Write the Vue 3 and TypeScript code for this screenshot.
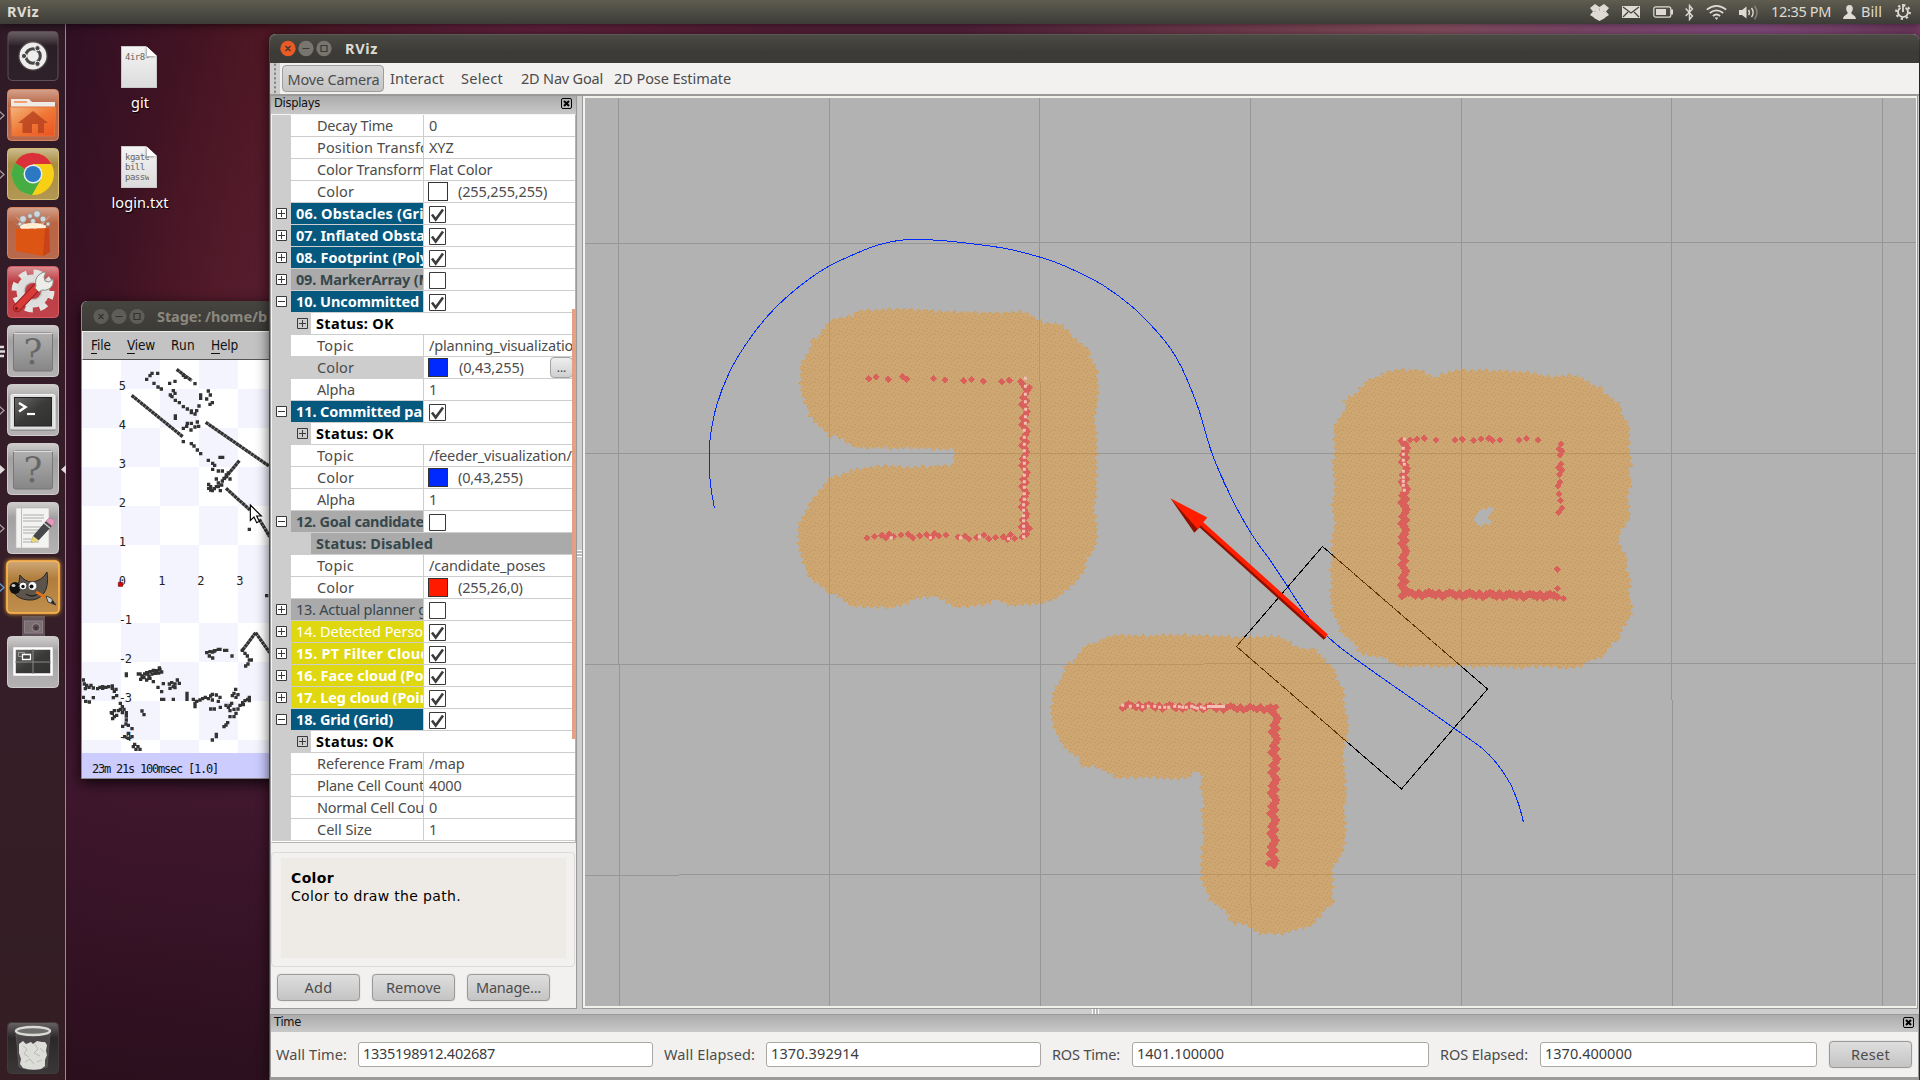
<script setup lang="ts">
type Pt = [number, number]

interface Row {
  name: string
  kind: 'prop' | 'display' | 'status'
  tone?: 'ok' | 'off' | 'warn'
  light?: boolean
  open?: boolean
  selected?: boolean
  checked?: boolean
  swatch?: string
  value?: string
  w?: number
}

// Spreads a label to the advance width of the desktop's UI font.
const vFit = {
  mounted(el: HTMLElement, binding: { value: number | undefined }) {
    if (!binding.value) return
    const natural = el.getBoundingClientRect().width
    const count = (el.textContent ?? '').trim().length
    el.style.letterSpacing = `${((binding.value - natural) / count).toFixed(3)}px`
  },
}

const rows: Row[] = [
  { kind: 'prop', name: 'Decay Time', w: 76, value: '0' },
  { kind: 'prop', name: 'Position Transfo', w: 112, value: 'XYZ' },
  { kind: 'prop', name: 'Color Transform', w: 109, value: 'Flat Color' },
  { kind: 'prop', name: 'Color', w: 37, swatch: '#ffffff', value: '(255,255,255)' },
  { kind: 'display', tone: 'ok', name: '06. Obstacles (Grid', w: 137, checked: true },
  { kind: 'display', tone: 'ok', name: '07. Inflated Obsta', w: 129, checked: true },
  { kind: 'display', tone: 'ok', name: '08. Footprint (Poly', w: 132, checked: true },
  { kind: 'display', tone: 'off', name: '09. MarkerArray (M', w: 136, checked: false },
  { kind: 'display', tone: 'ok', open: true, name: '10. Uncommitted p', w: 136, checked: true },
  { kind: 'status', name: 'Status: OK', w: 78 },
  { kind: 'prop', name: 'Topic', w: 37, value: '/planning_visualization' },
  { kind: 'prop', name: 'Color', w: 37, swatch: '#0029ff', value: '(0,43,255)', selected: true },
  { kind: 'prop', name: 'Alpha', w: 38, value: '1' },
  { kind: 'display', tone: 'ok', open: true, name: '11. Committed pa', w: 126, checked: true },
  { kind: 'status', name: 'Status: OK', w: 78 },
  { kind: 'prop', name: 'Topic', w: 37, value: '/feeder_visualization/' },
  { kind: 'prop', name: 'Color', w: 37, swatch: '#0029ff', value: '(0,43,255)' },
  { kind: 'prop', name: 'Alpha', w: 38, value: '1' },
  { kind: 'display', tone: 'off', open: true, name: '12. Goal candidate', w: 128, checked: false },
  { kind: 'status', tone: 'off', name: 'Status: Disabled', w: 117 },
  { kind: 'prop', name: 'Topic', w: 37, value: '/candidate_poses' },
  { kind: 'prop', name: 'Color', w: 37, swatch: '#ff1a00', value: '(255,26,0)' },
  { kind: 'display', tone: 'off', light: true, name: '13. Actual planner g', w: 131, checked: false },
  { kind: 'display', tone: 'warn', light: true, name: '14. Detected Perso', w: 127, checked: true },
  { kind: 'display', tone: 'warn', name: '15. PT Filter Cloud', w: 134, checked: true },
  { kind: 'display', tone: 'warn', name: '16. Face cloud (Poi', w: 132, checked: true },
  { kind: 'display', tone: 'warn', name: '17. Leg cloud (Poin', w: 133, checked: true },
  { kind: 'display', tone: 'ok', open: true, name: '18. Grid (Grid)', w: 97, checked: true },
  { kind: 'status', name: 'Status: OK', w: 78 },
  { kind: 'prop', name: 'Reference Fram', w: 106, value: '/map' },
  { kind: 'prop', name: 'Plane Cell Count', w: 107, value: '4000' },
  { kind: 'prop', name: 'Normal Cell Cou', w: 107, value: '0' },
  { kind: 'prop', name: 'Cell Size', w: 55, value: '1' },
]

const menus = [
  { key: 'F', rest: 'ile', w: 20 },
  { key: 'V', rest: 'iew', w: 28 },
  { key: '', rest: 'Run', w: 24 },
  { key: 'H', rest: 'elp', w: 27 },
]

// ---- 3D view -------------------------------------------------------------
const scale = (ox: number, oy: number, sx: number, sy: number, flat: number[]): Pt[] => {
  const out: Pt[] = []
  for (let i = 0; i < flat.length; i += 2) out.push([ox + flat[i] / sx, oy + flat[i + 1] / sy])
  return out
}
const fmt = (p: Pt) => `${p[0].toFixed(1)} ${p[1].toFixed(1)}`

// Outline made of the corners of rotated costmap cells.
const jagged = (pts: Pt[]): string => {
  const out: Pt[] = []
  let k = 0
  pts.forEach((a, i) => {
    const b = pts[(i + 1) % pts.length]
    const dx = b[0] - a[0]
    const dy = b[1] - a[1]
    const len = Math.hypot(dx, dy)
    const n = Math.max(1, Math.round(len / 3.6))
    for (let j = 0; j < n; j++) {
      const t = j / n
      const o = (k++ % 2 ? 1.5 : -1.5) * (k % 6 < 2 ? 1.5 : 0.9)
      out.push([a[0] + dx * t + (dy / len) * o, a[1] + dy * t - (dx / len) * o])
    }
  })
  return 'M' + out.map(fmt).join('L') + 'Z'
}

const smooth = (p: Pt[]): string => {
  let d = 'M' + fmt(p[0])
  for (let i = 0; i < p.length - 1; i++) {
    const a = p[Math.max(0, i - 1)]
    const b = p[i]
    const c = p[i + 1]
    const e = p[Math.min(p.length - 1, i + 2)]
    d += `C${fmt([b[0] + (c[0] - a[0]) / 6, b[1] + (c[1] - a[1]) / 6])} ${fmt([c[0] - (e[0] - b[0]) / 6, c[1] - (e[1] - b[1]) / 6])} ${fmt(c)}`
  }
  return d
}

const blobA = scale(690, 220, 2.8, 3, [392, 298, 455, 288, 470, 272, 590, 266, 640, 268, 720, 275, 850, 278, 935, 274, 990, 308, 1035, 312, 1065, 335, 1065, 345, 1120, 390, 1120, 410, 1140, 445, 1143, 500, 1143, 540, 1132, 600, 1140, 650, 1138, 830, 1131, 870, 1140, 910, 1140, 970, 1105, 1032, 1110, 1042, 1090, 1075, 1035, 1130, 990, 1150, 900, 1158, 855, 1138, 830, 1155, 745, 1163, 685, 1128, 625, 1138, 600, 1155, 560, 1163, 455, 1160, 400, 1120, 380, 1130, 382, 1110, 330, 1070, 325, 1045, 310, 1010, 303, 970, 303, 910, 340, 845, 332, 832, 350, 832, 388, 775, 440, 758, 450, 750, 545, 735, 610, 742, 735, 735, 740, 712, 742, 690, 640, 685, 570, 685, 465, 683, 400, 643, 392, 655, 385, 640, 332, 590, 330, 565, 313, 530, 308, 490, 310, 432, 345, 370, 336, 357, 355, 358])
const blobB = scale(1220, 350, 3, 3, [440, 88, 480, 80, 495, 65, 540, 58, 600, 60, 648, 85, 665, 72, 710, 60, 790, 60, 850, 62, 945, 68, 975, 80, 1070, 75, 1130, 112, 1148, 108, 1145, 122, 1205, 168, 1203, 190, 1228, 225, 1228, 290, 1235, 345, 1228, 370, 1235, 400, 1222, 440, 1232, 500, 1200, 550, 1195, 580, 1222, 620, 1218, 650, 1232, 690, 1228, 730, 1238, 790, 1200, 850, 1200, 870, 1185, 872, 1145, 925, 1105, 932, 1085, 950, 1040, 955, 960, 948, 905, 955, 820, 948, 760, 952, 710, 945, 680, 952, 600, 948, 540, 952, 490, 922, 430, 915, 412, 905, 415, 890, 360, 845, 355, 820, 338, 790, 330, 740, 335, 690, 330, 660, 338, 620, 332, 575, 345, 530, 335, 465, 345, 410, 338, 345, 345, 290, 340, 235, 378, 170, 370, 155, 385, 140, 400, 142])
const hole = scale(1220, 350, 3, 3, [790, 475, 801, 479, 808, 468, 822, 478, 802, 503, 815, 514, 807, 526, 795, 518, 782, 530, 760, 510, 776, 485])
const blobC = scale(1030, 610, 3, 3, [165, 105, 205, 98, 222, 82, 265, 75, 350, 78, 400, 74, 520, 76, 650, 82, 745, 78, 810, 115, 845, 120, 856, 112, 862, 128, 915, 178, 920, 205, 940, 235, 943, 290, 957, 345, 950, 390, 938, 430, 950, 545, 942, 600, 948, 660, 942, 720, 905, 780, 912, 830, 905, 850, 912, 885, 890, 892, 850, 945, 800, 960, 745, 975, 720, 970, 690, 975, 640, 940, 615, 945, 595, 930, 600, 915, 540, 870, 530, 845, 515, 815, 512, 775, 515, 740, 512, 715, 522, 690, 515, 600, 522, 575, 515, 545, 510, 520, 522, 500, 500, 482, 485, 500, 435, 508, 350, 502, 262, 505, 200, 470, 155, 472, 148, 460, 152, 450, 95, 405, 85, 380, 70, 350, 62, 310, 68, 250, 105, 185, 100, 172, 112, 155, 125, 160])
const inflated = jagged(blobA) + jagged(blobB) + jagged(blobC) + 'M' + hole.map(fmt).join('L') + 'Z'

const planned = smooth([
  ...scale(690, 220, 2.8, 3, [68, 863, 57, 790, 54, 720, 57, 650, 75, 555, 110, 458, 155, 375, 210, 297, 270, 232, 330, 180, 390, 138, 500, 85, 560, 66, 605, 59, 650, 59, 720, 63, 880, 85, 1000, 118, 1080, 153, 1160, 198, 1240, 262, 1305, 332, 1345, 385, 1374, 437, 1400, 500, 1425, 570, 1460, 695, 1500, 800]),
  ...scale(1220, 350, 3, 3, [0, 368, 40, 455, 95, 553, 150, 630, 200, 705, 260, 795, 320, 857, 365, 896, 450, 958, 560, 1035, 700, 1133, 785, 1194, 830, 1240, 870, 1300, 895, 1360, 910, 1415]),
])

const diamonds = (pts: Pt[], r = 3.6): string =>
  pts.map(([x, y]) => `M${(x - r).toFixed(1)} ${y.toFixed(1)}l${r} ${-r}l${r} ${r}l${-r} ${r}z`).join('')

// Dense wall: overlapping cells that wobble around the segment.
const wall = (x1: number, y1: number, x2: number, y2: number, amp: number): Pt[] => {
  const len = Math.hypot(x2 - x1, y2 - y1)
  const n = Math.round(len / 3.4)
  const out: Pt[] = []
  const wave = [-1, 0.2, 1, 0.4, -0.6, 0.7]
  for (let i = 0; i <= n; i++) {
    const t = i / n
    const o = wave[i % 6] * amp
    out.push([x1 + (x2 - x1) * t + ((y2 - y1) / len) * o, y1 + (y2 - y1) * t - ((x2 - x1) / len) * o])
  }
  return out
}

const obstacles =
  diamonds([
    ...scale(690, 220, 2.8, 3, [501, 476, 521, 472, 555, 478, 596, 470, 607, 478, 682, 476, 714, 481, 767, 482, 788, 479, 821, 484, 873, 485, 894, 481, 926, 485, 950, 503, 496, 954, 517, 950, 537, 946, 549, 954, 558, 942, 570, 950, 591, 946, 611, 943, 624, 953, 643, 948, 663, 944, 675, 953, 685, 940, 697, 948, 717, 945, 750, 951, 770, 947, 782, 957, 803, 952, 823, 946, 836, 957, 856, 953, 877, 950, 889, 957, 897, 944, 909, 955, 930, 950, 950, 925]),
    ...scale(1220, 350, 3, 3, [590, 268, 613, 265, 648, 270, 705, 271, 727, 268, 761, 272, 783, 268, 806, 265, 818, 272, 841, 270, 896, 270, 920, 266, 954, 271, 1023, 283, 1017, 296, 1026, 303, 1020, 315, 1023, 341, 1016, 352, 1025, 360, 1018, 374, 1021, 396, 1013, 408, 1017, 431, 1021, 452, 1025, 474, 1016, 487, 1012, 658, 1012, 716, 1030, 746, 570, 270, 545, 275]),
    ...scale(1030, 610, 3, 3, [737, 291, 716, 760, 732, 768]),
  ]) +
  diamonds([...wall(1024.5, 384, 1024, 534, 2.4), ...wall(1122, 706, 1274, 709, 2)], 4) +
  diamonds([...wall(1404.5, 441, 1403.5, 592, 2.2), ...wall(1402, 594, 1557, 596, 1.8), ...wall(1275, 712, 1272.5, 864, 2.4)], 4.7)

const squares = (pts: Pt[], s: number): string =>
  pts.map(([x, y]) => `M${(x - s / 2).toFixed(1)} ${(y - s / 2).toFixed(1)}h${s}v${s}h${-s}z`).join('')

const laser: Pt[] = [
  ...scale(690, 220, 2.8, 3, [939, 475, 939, 499, 939, 523, 939, 545, 940, 568, 939, 590, 939, 610, 936, 631, 936, 652, 936, 673, 936, 692, 936, 712, 936, 730, 936, 748, 936, 766, 936, 785, 936, 802, 936, 821, 936, 838, 934, 854, 934, 871, 934, 887, 934, 902, 934, 919, 934, 934, 934, 950, 564, 953, 673, 953, 757, 953, 810, 950, 892, 956]),
  ...scale(1220, 350, 3, 3, [553, 268, 550, 295, 550, 313, 550, 331, 553, 343, 550, 364, 550, 382, 550, 394, 550, 406, 553, 421]),
  ...scale(1030, 610, 3, 3, [278, 286, 301, 289, 323, 286, 338, 290, 355, 289, 374, 289, 389, 292, 404, 292, 416, 292, 434, 289, 448, 290, 458, 292, 469, 292, 485, 289, 493, 292, 502, 295, 514, 291, 523, 295]),
]
const laserPath = squares(laser, 3) + 'M1207 705h18v3h-18z'

// ---- Stage simulator -----------------------------------------------------
const tiles: Pt[] = []
for (let c = -1; c < 4; c++) {
  for (let r = -6; r < 5; r++) {
    const shade = r < 0 ? 0 : 1
    if (Math.abs(c + r) % 2 === shade) tiles.push([363 + c * 117, 882 + r * 117])
  }
}

const hits = (flat: number[]): string => squares(scale(0, 0, 1, 1, flat), 10)
const scan = hits([
  440, 268, 450, 257, 456, 250, 473, 250, 462, 280, 474, 291, 484, 297, 509, 280, 525, 274, 550, 256, 556, 262, 585, 281,
  511, 315, 520, 302, 525, 310, 516, 320, 526, 331, 538, 338, 550, 350, 562, 357, 574, 363, 585, 372, 574, 368, 590, 362, 597, 348,
  602, 315, 602, 325, 625, 303, 631, 315, 620, 327, 630, 343, 637, 338, 526, 378, 526, 385, 550, 415, 560, 409, 562, 400, 573, 420, 574, 400, 585, 411, 592, 396, 596, 409,
  550, 455, 574, 461, 582, 468, 592, 480, 602, 491, 625, 511, 638, 520, 644, 526, 638, 538, 660, 502, 668, 502, 655, 543, 667, 543, 649, 567, 655, 579, 667, 573, 672, 565, 679, 560, 685, 549, 690, 567, 679, 555, 649, 590, 661, 602, 626, 583, 632, 590, 626, 595, 637, 602, 655, 590, 665, 585,
  748, 718, 800, 917, 643, 596, 632, 600,
  620, 1088, 630, 1085, 638, 1086, 628, 1098, 638, 1104, 645, 1082, 655, 1078, 660, 1078, 674, 1081, 680, 1081, 696, 1098, 643, 1083, 727, 1081, 735, 1090, 742, 1098, 748, 1110, 754, 1110, 744, 1122, 737, 1128,
  379, 1152, 379, 1157, 420, 1152, 426, 1158, 415, 1152, 434, 1152, 444, 1152, 440, 1148, 450, 1145, 460, 1141, 470, 1142, 466, 1150, 456, 1152, 476, 1149, 480, 1138, 485, 1146, 478, 1134, 432, 1163, 422, 1168, 440, 1170, 450, 1165, 460, 1175, 447, 1160,
  250, 1170, 253, 1182, 260, 1186, 267, 1192, 273, 1186, 280, 1194, 256, 1196, 293, 1196, 300, 1192, 308, 1190, 318, 1192, 326, 1190, 337, 1188, 337, 1195, 348, 1198, 343, 1204, 308, 1195, 350, 1217, 340, 1223, 250, 1222, 280, 1223, 257, 1234, 268, 1236,
  485, 1205, 474, 1192, 490, 1181, 508, 1182, 515, 1178, 525, 1182, 532, 1170, 538, 1180, 520, 1190, 510, 1195, 525, 1193, 485, 1228, 491, 1228, 520, 1228, 561, 1210, 561, 1218, 561, 1228, 580, 1228, 585, 1240, 585, 1250, 590, 1234, 600, 1230, 608, 1226, 616, 1222, 625, 1226, 632, 1218, 637, 1213, 637, 1230, 649, 1215, 660, 1222, 655, 1234, 632, 1257, 643, 1257, 661, 1252, 678, 1246,
  707, 1198, 702, 1210, 714, 1214, 697, 1217, 708, 1222, 743, 1228, 748, 1222, 748, 1232, 735, 1232, 728, 1238, 720, 1246, 730, 1244, 690, 1246, 685, 1252, 690, 1262, 702, 1258, 714, 1257, 708, 1270, 690, 1280, 702, 1280, 695, 1240, 683, 1298, 678, 1305, 672, 1310, 649, 1333, 649, 1340, 637, 1350,
  361, 1240, 367, 1250, 361, 1258, 355, 1262, 372, 1258, 367, 1268, 343, 1262, 337, 1270, 343, 1280, 338, 1286, 350, 1276, 379, 1268, 379, 1278, 379, 1290, 378, 1302, 368, 1309, 385, 1306, 396, 1316, 385, 1330, 374, 1340, 385, 1345, 396, 1340, 404, 1363, 400, 1370, 408, 1378, 414, 1370, 420, 1378, 426, 1263, 432, 1274, 334, 1268,
])
const walls: string[] = ['M395 316L548 440', 'M617 397L807 528', 'M678 595L750 660', 'M778 688L809 740', 'M530 238L575 272', 'M718 512L672 568', 'M767 1028L725 1084', 'M767 1028L809 1088']
const yLabels: [string, number][] = [['5', 300], ['4', 417], ['3', 534], ['2', 651], ['1', 768], ['0', 885], ['-1', 1002], ['-2', 1119], ['-3', 1236], ['-4', 1353]]
const xLabels: [string, number][] = [['1', 475], ['2', 592], ['3', 709]]

const times = [
  { label: 'Wall Time:', lw: 71, value: '1335198912.402687', vw: 132, cls: 'f1' },
  { label: 'Wall Elapsed:', lw: 91, value: '1370.392914', vw: 88, cls: 'f2' },
  { label: 'ROS Time:', lw: 68, value: '1401.100000', vw: 87, cls: 'f3' },
  { label: 'ROS Elapsed:', lw: 88, value: '1370.400000', vw: 87, cls: 'f4' },
]
</script>

<template>
  <div class="desktop">
    <header class="panel">
      <b v-fit="32" class="app">RViz</b>
      <div class="tray">
        <svg class="t1" width="19" height="17" viewBox="0 0 19 17"><path d="M5 0l4.500 3L14 0l5 4-3 3.500 3 3.500-4 2.500V14l-5.500 3L4 14v-.5L0 11l3-3.500L0 4z" fill="#dfdbd2" /><path d="M9.500 4v3M4 7.500h2M13 7.500h2" stroke="#a5a299" stroke-width=".6" /></svg>
        <svg class="t2" width="18" height="12" viewBox="0 0 18 12"><path fill="#dfdbd2" d="M0 0h18v12H0z" /><path d="M1 1l8 6 8-6M1 11l5-5M17 11l-5-5" fill="none" stroke="#45443e" stroke-width="1.3" /></svg>
        <svg class="t3" width="21" height="12" viewBox="0 0 21 12"><rect x=".8" y=".8" width="17" height="10.4" rx="2" fill="none" stroke="#dfdbd2" stroke-width="1.2" /><path fill="#dfdbd2" d="M3 3h10v6H3zM18 3.500h2v5h-2z" /></svg>
        <svg class="t4" width="9" height="17" viewBox="0 0 9 17"><path d="M.7 4.500 7.500 12 4.500 15.500V1.500L7.500 5 .7 12" fill="none" stroke="#dfdbd2" stroke-width="1.4" /></svg>
        <svg class="t5" width="21" height="15" viewBox="0 0 21 15"><path d="M.8 4.700q9.700-7.500 19.400 0M3.800 8q6.700-5.200 13.400 0M6.900 11q3.600-3 7.200 0" fill="none" stroke="#dfdbd2" stroke-width="1.700" /><path fill="#dfdbd2" d="M8.600 12.500h3.800L10.500 15z" /></svg>
        <svg class="t6" width="20" height="15" viewBox="0 0 20 15"><path fill="#dfdbd2" d="M0 5h3l4.500-3.500v12L3 10H0z" /><path d="M9.500 5q1.800 2.500 0 5M12.500 3q3.300 4.500 0 9" fill="none" stroke="#dfdbd2" stroke-width="1.500" /><path d="M15.500.8q5 6.700 0 13.400" fill="none" stroke="#86837a" stroke-width="1.500" /></svg>
        <span v-fit="60" class="t7">12:35 PM</span>
        <svg class="t8" width="13" height="14" viewBox="0 0 13 14"><path fill="#dfdbd2" d="M6.500 0C9 0 10 1.700 9.800 4 9.600 6 8.700 7 8.200 7.800c0 1.700 4.300 2.200 4.800 6.200H0c.5-4 4.800-4.500 4.800-6.200C4.300 7 3.400 6 3.200 4 3 1.700 4 0 6.500 0z" /></svg>
        <span v-fit="21" class="t9">Bill</span>
        <svg class="t10" width="16" height="16" viewBox="0 0 16 16"><circle cx="8" cy="8" r="6.800" fill="none" stroke="#dfdbd2" stroke-width="2.200" stroke-dasharray="2.200 3.140" /><path d="M5.500 3.700a5 5 0 1 0 5 0M8 0v8" fill="none" stroke="#dfdbd2" stroke-width="1.800" /></svg>
      </div>
    </header>

    <nav class="launcher">
      <svg class="tile" viewBox="0 0 52 52"><rect x="1" y="1.500" width="50" height="49" rx="4" fill="url(#dash)" stroke="#5d5055" /><circle cx="26" cy="26" r="15" fill="#fff" opacity=".12" /><circle cx="26" cy="26" r="13.500" fill="#ededeb" /><circle cx="26" cy="26" r="7.300" fill="none" stroke="#494446" stroke-width="3" /><path d="M26 26h-11M26 26l5-9M26 26l5 9" stroke="#ededeb" stroke-width="1.200" /><g fill="#494446" stroke="#ededeb"><circle cx="17" cy="26" r="2.600" /><circle cx="30.500" cy="18.200" r="2.600" /><circle cx="30.500" cy="33.800" r="2.600" /></g><circle cx="26" cy="26" r="4.500" fill="#ededeb" /></svg>
      <svg class="tile" viewBox="0 0 52 52"><rect x=".5" y=".5" width="51" height="51" rx="4" fill="url(#home)" stroke="#d88562" /><path d="M4 10h18l3 3h23v8H4z" fill="#eeeae6" /><path d="M7 12h13v2H7z" fill="#f2a070" /><path d="M3 18h46l-2 29H5z" fill="url(#folder)" stroke="#e4723c" /><path d="M26 22 11 34h4.500v10h9.500v-9h6v9h6V34h4z" fill="#b5401f" opacity=".8" /></svg>
      <svg class="tile" viewBox="0 0 52 52"><rect x=".5" y=".5" width="51" height="51" rx="4" fill="url(#gold)" stroke="#d5bd72" /><circle cx="26" cy="26" r="21" fill="#f7cf14" /><path d="M26 26 8 15a21 21 0 0 1 36.500 1H26z" fill="#d9303a" /><path d="M8 15a21 21 0 0 0 17 32l9-16-8-5z" fill="#46ad43" /><circle cx="26" cy="26" r="9.500" fill="#e9eef4" /><circle cx="26" cy="26" r="8" fill="#2d78c2" /></svg>
      <svg class="tile" viewBox="0 0 52 52"><rect x=".5" y=".5" width="51" height="51" rx="4" fill="url(#home)" stroke="#d88562" /><path d="M26 22 8 9l10 12L6 15l12 8zM26 22 44 8 34 20l11-5-11 8z" fill="#f0bda4" opacity=".6" /><g fill="#cfd8dd" stroke="#8b817f" stroke-width=".7"><circle cx="16" cy="12" r="3.400" /><circle cx="23" cy="9" r="2.400" /><circle cx="30" cy="7" r="3.400" /><circle cx="36" cy="12" r="3" /><circle cx="26" cy="14" r="2.600" /><circle cx="41" cy="17" r="2" /><circle cx="13" cy="17" r="2" /></g><ellipse cx="26" cy="20" rx="13" ry="4" fill="#fff0dc" /><path d="M9 22l33-1 1 24-7 4-27-5z" fill="#dc5513" /><path d="M38 22l4-1 1 24-7 4z" fill="#c9431a" /><path d="M21 22v-4h7v4" fill="none" stroke="#ffe9c0" stroke-width="1.300" /></svg>
      <svg class="tile" viewBox="0 0 52 52"><rect x=".5" y=".5" width="51" height="51" rx="4" fill="url(#red)" stroke="#d95a60" /><circle cx="26" cy="25" r="18" fill="none" stroke="#e3e3e2" stroke-width="7" stroke-dasharray="7.500 6.640" /><circle cx="26" cy="25" r="13" fill="#c4c4c3" stroke="#dededd" stroke-width="7" /><circle cx="26" cy="25" r="8" fill="#bd3f45" /><path d="M10 42 30 21" stroke="#9e1e22" stroke-width="8.500" stroke-linecap="round" /><path d="M10 42 30 21" stroke="#d93b39" stroke-width="6.200" stroke-linecap="round" /><circle cx="9.500" cy="42.500" r="1.700" fill="#7c1c1c" /><path d="M29 20q-2-8 4-12 3-2.500 6-2l-2 5 1 4 4 1 4-3q1 7-4 10-4 2-7 1l-3 2-4-4z" fill="#ecece9" stroke="#8b8b87" /></svg>
      <svg class="tile" viewBox="0 0 52 52"><rect x=".5" y=".5" width="51" height="51" rx="4" fill="url(#grey)" stroke="#cfcccb" /><rect x="6.500" y="8" width="39" height="38" rx="2" fill="url(#slab)" stroke="#777" /><path d="M7 8.500h38" stroke="#ddd" /><text x="26" y="39" text-anchor="middle" class="q">?</text></svg>
      <svg class="tile" viewBox="0 0 52 52"><rect x=".5" y=".5" width="51" height="51" rx="4" fill="url(#grey)" stroke="#cfcccb" /><rect x="4" y="10.500" width="44" height="35" rx="1.500" fill="#dedede" stroke="#f5f5f5" /><path d="M4 46h44" stroke="#777" /><rect x="7.500" y="13.500" width="37" height="28.500" fill="url(#term)" stroke="#222" /><path d="M12 19l6.500 4-6.500 4.500" fill="none" stroke="#fff" stroke-width="2.500" /><path d="M20 30h8" stroke="#fff" stroke-width="2.200" /></svg>
      <svg class="tile" viewBox="0 0 52 52"><rect x=".5" y=".5" width="51" height="51" rx="4" fill="url(#grey)" stroke="#cfcccb" /><rect x="6.500" y="8" width="39" height="38" rx="2" fill="url(#slab)" stroke="#777" /><path d="M7 8.500h38" stroke="#ddd" /><text x="26" y="39" text-anchor="middle" class="q">?</text></svg>
      <svg class="tile" viewBox="0 0 52 52"><rect x=".5" y=".5" width="51" height="51" rx="4" fill="url(#grey)" stroke="#cfcccb" /><path d="M9 6h33v40H9z" fill="#f3f3f1" stroke="#bbb" stroke-width=".6" /><path d="M14.500 6v40" stroke="#e8a9a9" /><path d="M16 13h21M16 16h21M16 19h19M16 25h21M16 28h17M16 31h20M16 37h12M16 40h16" stroke="#aaa" stroke-width="1" /><path d="M24 41l2-7 13-15 6 5-13 14z" fill="#45474a" /><path d="M24 41l2-7 6 4.500z" fill="#e8d878" /><path d="M39 19l3-3q4 0 6 4l-3 4z" fill="#e59bc0" stroke="#b96b94" stroke-width=".6" /><path d="M37 21l6 5" stroke="#ccc" stroke-width="1.500" /></svg>
      <svg class="tile glow" viewBox="0 0 52 52"><rect x="0" y="0" width="52" height="52" rx="4" fill="url(#amber)" stroke="#ffb84e" stroke-width="1.600" /><path d="M13 14q5 7 12 7 10-1 15-10 2 14-3 21-6 8-16 7-10-1-14-7 0-7 5-11z" fill="#5d554b" stroke="#2c2824" /><ellipse cx="8" cy="27" rx="5.500" ry="6" fill="#111" /><ellipse cx="6.500" cy="24.500" rx="2" ry="1.500" fill="#ccc" /><circle cx="16" cy="25" r="4" fill="#fff" stroke="#444" /><circle cx="25.500" cy="25" r="4.500" fill="#fff" stroke="#444" /><circle cx="16" cy="25.500" r="1.700" fill="#111" /><circle cx="24.500" cy="25.500" r="2" fill="#111" /><path d="M19 33q6 4 12 0" fill="none" stroke="#222" stroke-width="1.500" /><path d="M29 31l11 6" stroke="#e0711b" stroke-width="2.600" /><path d="M39 35l5 2 5 7-8-3z" fill="#c8c8c8" stroke="#444" /><path d="M45 39l4 5-5-2z" fill="#222" /></svg>
      <svg class="mini" viewBox="0 0 23 20"><path d="M0 0h23v20H0z" fill="#62535a" /><rect x="2.500" y="5" width="18" height="12" fill="#7b6f72" stroke="#8d8185" /><circle cx="14" cy="11.500" r="4" fill="#5a4c52" stroke="#988d90" /><path d="M12.500 10.500h3v3h-3z" fill="#40363a" /></svg>
      <svg class="tile" viewBox="0 0 52 52"><rect x=".5" y=".5" width="51" height="51" rx="4" fill="url(#grey)" stroke="#cfcccb" /><rect x="7.500" y="12.500" width="37" height="26" fill="url(#term)" stroke="#fff" stroke-width="2.500" /><path d="M26 13v25M8 26h36" stroke="#888" /><path d="M11.500 16.500h6v4h-6z" fill="none" stroke="#999" /><path d="M15.500 18.500h8v5h-8z" fill="#444" stroke="#fff" stroke-width="1.300" /></svg>
      <svg class="tile trash" viewBox="0 0 52 52"><rect x=".5" y=".5" width="51" height="51" rx="4" fill="url(#bin)" stroke="#413a3c" /><path d="M9 12l3 33q14 5 28 0l3-33z" fill="#8a8a88" opacity=".3" stroke="#aaa" /><path d="M12 22l4-3 3 3 5-2 2 2 4-3 5 1 3 0 2 3-1 6 1 4-2 5v6l-4 3q-10 2-18-1l-3-4 1-5-2-6z" fill="#dcdcd9" /><path d="M16 24l4 3-3 5 5 3M28 22l3 5-4 4 6 3M18 40l5-3 4 5M33 26l4 4M30 40l5-2" stroke="#bbbab7" fill="none" /><ellipse cx="26" cy="9" rx="17" ry="4" fill="#6e6e6c" stroke="#d9d9d6" stroke-width="2.400" /></svg>
      <svg class="arrows" width="66" height="1056" viewBox="0 24 66 1056">
        <g fill="none" stroke="#a79ca1" stroke-width="1.300"><path d="M-1 111l5 4.500-5 4.500M-1 170l5 4.500-5 4.500M-1 406l5 4.500-5 4.500M-1 524l5 4.500-5 4.500" /><path d="M-1 583l5 4.500-5 4.500" stroke="#5f9fd0" /></g>
        <path d="M0 465l5 4.500-5 4.500zM66 465l-5 4.500 5 4.500z" fill="#dedadc" />
        <path d="M0 347h4M0 351.500h5M0 356h4" stroke="#dedadc" stroke-width="2.500" />
      </svg>
    </nav>

    <svg class="defs" width="0" height="0">
      <defs>
        <linearGradient id="dash" x2="0" y2="1"><stop stop-color="#6b6266" /><stop offset=".3" stop-color="#2b1f26" /><stop offset="1" stop-color="#2e2129" /></linearGradient>
        <linearGradient id="home" x2="0" y2="1"><stop stop-color="#d3a28d" /><stop offset=".3" stop-color="#b96545" /><stop offset="1" stop-color="#b8694d" /></linearGradient>
        <linearGradient id="folder" x2="1" y2="1"><stop stop-color="#f3b57c" /><stop offset=".5" stop-color="#ef7836" /><stop offset="1" stop-color="#ec4f1c" /></linearGradient>
        <linearGradient id="gold" x2="0" y2="1"><stop stop-color="#cdbd91" /><stop offset=".3" stop-color="#a98c42" /><stop offset="1" stop-color="#b39753" /></linearGradient>
        <linearGradient id="red" x2="0" y2="1"><stop stop-color="#d98f90" /><stop offset=".3" stop-color="#bd3d43" /><stop offset="1" stop-color="#bf434a" /></linearGradient>
        <linearGradient id="grey" x2="0" y2="1"><stop stop-color="#cfcecd" /><stop offset=".3" stop-color="#a3a0a1" /><stop offset="1" stop-color="#b5b2b3" /></linearGradient>
        <linearGradient id="slab" x2="0" y2="1"><stop stop-color="#b0b0b0" /><stop offset="1" stop-color="#868686" /></linearGradient>
        <linearGradient id="term" x2="1" y2="1"><stop stop-color="#6a6a68" /><stop offset=".5" stop-color="#3a3a39" /><stop offset="1" stop-color="#30302f" /></linearGradient>
        <linearGradient id="amber" x2="0" y2="1"><stop stop-color="#cfa878" /><stop offset=".35" stop-color="#b07d3c" /><stop offset="1" stop-color="#c1904d" /></linearGradient>
        <linearGradient id="bin" x2="0" y2="1"><stop stop-color="#6a6365" /><stop offset=".3" stop-color="#2c2729" /><stop offset="1" stop-color="#3b3638" /></linearGradient>
      </defs>
    </svg>

    <div class="files">
      <figure>
        <div class="page"><pre>4ir8-</pre><i /></div>
        <figcaption v-fit="18">git</figcaption>
      </figure>
      <figure>
        <div class="page"><pre>kgate
bill
passw</pre><i /></div>
        <figcaption v-fit="57">login.txt</figcaption>
      </figure>
    </div>

    <section class="stage">
      <div class="bar">
        <svg width="53" height="17" viewBox="0 0 53 17"><g fill="#5f5d57"><circle cx="8" cy="8.500" r="7.600" /><circle cx="26" cy="8.500" r="7.600" /><circle cx="44" cy="8.500" r="7.600" /></g><path d="M5.500 6l5 5m0-5l-5 5M22.500 8.500h7M41 5.500h6v6h-6z" fill="none" stroke="#33322e" stroke-width="1.200" /></svg>
        <b v-fit="110">Stage: /home/b</b>
      </div>
      <div class="menu">
        <span v-for="m in menus" :key="m.rest" v-fit="m.w"><u>{{ m.key }}</u>{{ m.rest }}</span>
      </div>
      <svg class="world" viewBox="246 210 564 1179" preserveAspectRatio="none">
        <path fill="#fff" d="M246 210h564v1179H246z" />
        <rect v-for="(t, i) in tiles" :key="i" :x="t[0]" :y="t[1]" width="117" height="117" fill="#f4f4ff" />
        <g class="axis">
          <text v-for="l in yLabels" :key="l[0]" :x="356" :y="l[1]">{{ l[0] }}</text>
          <text v-for="l in xLabels" :key="l[0]" :x="l[1]" y="885">{{ l[0] }}</text>
        </g>
        <path v-for="w in walls" :key="w" :d="w" class="wall" />
        <path :d="scan" fill="#333" />
        <path d="M355 877h13v12h-13z" fill="#e00000" stroke="#700" stroke-width="2" />
        <path d="M751 645v46l11-10 8 17 8-4-8-16h14z" fill="#fff" stroke="#000" stroke-width="3.500" />
      </svg>
      <div class="clock"><span>23m 21s 100msec [1.0]</span></div>
    </section>

    <section class="rviz">
      <div class="title">
        <svg width="53" height="17" viewBox="0 0 53 17"><circle cx="8" cy="8.500" r="7.700" fill="#ea5a24" /><g fill="#77756d"><circle cx="26" cy="8.500" r="7.700" /><circle cx="44" cy="8.500" r="7.700" /></g><path d="M5.500 6l5 5m0-5l-5 5M22.500 8.500h7M41 5.500h6v6h-6z" fill="none" stroke="#3a3833" stroke-width="1.200" /></svg>
        <b v-fit="33">RViz</b>
      </div>
      <div class="tools">
        <i class="grip" />
        <span class="tool active"><em v-fit="92">Move Camera</em></span>
        <span class="tool c1"><em v-fit="54">Interact</em></span>
        <span class="tool c2"><em v-fit="42">Select</em></span>
        <span class="tool c3"><em v-fit="82">2D Nav Goal</em></span>
        <span class="tool c4"><em v-fit="117">2D Pose Estimate</em></span>
      </div>
      <div class="middle">
        <aside class="dock">
          <div class="dockhead"><span v-fit="46">Displays</span><svg width="11" height="11" viewBox="0 0 11 11"><rect x=".5" y=".5" width="10" height="10" rx="1.500" fill="none" stroke="#000" /><path d="M3 3l5 5m0-5l-5 5" stroke="#000" stroke-width="2" /></svg></div>
          <div class="tree">
            <div v-for="(r, i) in rows" :key="i" class="row" :class="[r.kind, r.tone, { selected: r.selected, light: r.light }]">
              <div class="gutter">
                <svg v-if="r.kind !== 'prop' && !(r.kind === 'status' && r.tone === 'off')" width="11" height="11" viewBox="0 0 11 11"><path d="M.5.5h10v10H.5z" :fill="r.kind === 'display' ? '#fff' : 'none'" stroke="#3a3a3a" /><path :d="r.open ? 'M2 5.500h7' : 'M2 5.500h7M5.500 2v7'" stroke="#3a3a3a" /></svg>
              </div>
              <div class="name"><span v-fit="r.w">{{ r.name }}</span></div>
              <div v-if="r.kind !== 'status'" class="val">
                <svg v-if="r.kind === 'display'" class="check" width="17" height="17" viewBox="0 0 17 17"><path d="M.5.5h16v16H.5z" fill="#fff" stroke="#3a3a3a" /><path v-if="r.checked" d="M3 8.500l3.700 5L14 3.500" fill="none" stroke="#3c3c3c" stroke-width="2.600" /></svg>
                <i v-if="r.swatch" class="swatch" :style="{ background: r.swatch }" />
                <span v-if="r.value">{{ r.value }}</span>
                <button v-if="r.selected" class="more">...</button>
              </div>
            </div>
            <div class="thumb" />
          </div>
          <div class="help"><div><b v-fit="43">Color</b><span v-fit="170">Color to draw the path.</span></div></div>
          <div class="buttons">
            <button><em v-fit="28">Add</em></button><button><em v-fit="55">Remove</em></button><button><em v-fit="65">Manage...</em></button>
          </div>
        </aside>
        <div class="split"><i /></div>
        <div class="view">
          <svg width="1331" height="908" viewBox="585 98 1331 908">
            <defs>
              <pattern id="cells" width="12" height="12" patternUnits="userSpaceOnUse">
                <path d="M1 1h1v1h-1zM5 0h1v1h-1zM9 2h1v1h-1zM3 4h1v1h-1zM7 5h1v1h-1zM11 6h1v1h-1zM1 7h1v1h-1zM5 8h1v1h-1zM9 9h1v1h-1zM3 10h1v1h-1zM7 11h1v1h-1zM11 10h1v1h-1z" fill="#ba9373" />
              </pattern>
            </defs>
            <path fill="#b2b2b2" d="M585 98h1331v908H585z" />
            <path class="grid" d="M618.500 98V664M619.500 664V1006M829.500 98V1006M1039.500 98V382M1040.500 382V1006M1250.500 98V906M1251.500 906V1006M1461.500 98V1006M1671.500 98V700M1672.500 700V1006M1882.500 98V1006M585 243.500H998M998 242.500H1916M585 453.500H1916M585 664.500H1204M1204 663.500H1916M585 875.500H679M679 874.500H1916" />
            <path d="M1322.500 546.500L1487.500 689L1401.500 789L1236.500 646.500z" class="thin" stroke="#000" />
            <path :d="inflated" fill="#ff8f00" fill-opacity=".36" fill-rule="evenodd" shape-rendering="crispEdges" />
            <path :d="inflated" fill="url(#cells)" fill-rule="evenodd" />
            <path :d="obstacles" fill="#da615b" shape-rendering="crispEdges" />
            <path :d="laserPath" fill="#f3c0b6" />
            <path :d="planned" class="thin" stroke="#002aff" />
            <path d="M1200 525.500l125 113" stroke="#8f1000" stroke-width="3.600" />
            <path d="M1170.400 498.300L1194.300 532.700L1200 527z" fill="#8f1000" />
            <path d="M1170.400 498.300L1207.300 517.500L1197.500 529z" fill="#ff1e00" />
            <path d="M1201 523L1326.500 636" stroke="#ff1e00" stroke-width="4.200" />
          </svg>
        </div>
      </div>
      <div class="hsplit"><i /></div>
      <div class="time">
        <div class="timehead"><span v-fit="27">Time</span><svg width="11" height="11" viewBox="0 0 11 11"><rect x=".5" y=".5" width="10" height="10" rx="1.500" fill="none" stroke="#000" /><path d="M3 3l5 5m0-5l-5 5" stroke="#000" stroke-width="2" /></svg></div>
        <div class="fields">
          <template v-for="t in times" :key="t.label">
            <label :class="t.cls"><em v-fit="t.lw">{{ t.label }}</em></label>
            <div class="input" :class="t.cls"><em v-fit="t.vw">{{ t.value }}</em></div>
          </template>
          <button class="reset"><em v-fit="39">Reset</em></button>
        </div>
      </div>
    </section>
  </div>
</template>

<style>
body { margin: 0; overflow: hidden; background: #2c0f22; }
</style>

<style scoped>
* { box-sizing: border-box; }
.desktop { position: relative; width: 1920px; height: 1080px; overflow: hidden; font: 14.500px/20px "Noto Sans", "Open Sans", sans-serif; color: #4c4c4c;
  background: radial-gradient(ellipse 330px 60px at 1740px 24px, #9a5a95 0, rgba(140, 80, 130, 0) 100%), radial-gradient(ellipse 500px 50px at 1450px 24px, #a06070 0, rgba(150, 90, 100, 0) 100%), radial-gradient(ellipse 300px 40px at 550px 28px, #6d2645 0, rgba(110, 40, 70, 0) 100%), radial-gradient(ellipse 240px 460px at 350px 400px, #5a2036 0, rgba(90, 30, 50, 0) 100%), linear-gradient(100deg, #2e0f24 60px, #4e1622 270px, #5c2440 900px); }
.desktop::before { content: ""; position: absolute; left: 66px; top: 350px; width: 204px; height: 730px; background: linear-gradient(#38102a, #3d1730 60%, #220d1b); opacity: .8; }
em { font-style: normal; }
em, b, figcaption, .dockhead span, .timehead span, .name span, .help span { display: inline-block; white-space: nowrap; }
.panel { position: relative; display: flex; justify-content: space-between; align-items: center; height: 24px; padding: 0 6px 0 7px; background: linear-gradient(#5f5d50, #3c3b37); color: #dfdbd2; z-index: 2; box-shadow: 0 1px 8px rgba(0, 0, 0, .6); }
.panel b { color: #dfdbd2; margin-bottom: 2px; }
.tray { display: flex; align-items: center; height: 24px; width: 324px; }
.tray > * { flex: none; }
.t2 { margin-left: 13px; } .t3 { margin-left: 13px; } .t4 { margin-left: 11px; } .t5 { margin-left: 12px; } .t6 { margin-left: 12px; } .t7 { margin-left: 12px; } .t8 { margin-left: 12px; } .t9 { margin-left: 5px; } .t10 { margin-left: 13px; }
.tray span { display: inline-block; white-space: nowrap; margin-bottom: 2px; }
.launcher { position: absolute; left: 0; top: 24px; width: 66px; height: 1056px; padding: 6px 0 6px 7px; display: flex; flex-direction: column; gap: 7px; background: linear-gradient(#301a26, #351e28 50%, #341e24); border-right: 1px solid #9c8a93; }
.tile { width: 52px; height: 52px; flex: none; overflow: visible; }
.glow { filter: drop-shadow(0 0 2px #ffae3c); }
.mini { width: 23px; height: 20px; margin: -4px 0 -7px 15px; flex: none; }
.trash { margin-top: auto; }
.arrows { position: absolute; left: 0; top: 0; }
.q { font: 35px "DejaVu Serif", serif; fill: #666; }
.defs { position: absolute; }
.files { position: absolute; left: 90px; top: 46px; width: 100px; display: flex; flex-direction: column; gap: 34px; }
figure { margin: 0; height: 66px; display: flex; flex-direction: column; align-items: center; }
.page { position: relative; width: 36px; height: 45px; background: linear-gradient(#f4f4f4, #dcdcdc); border: 1px solid #c9c9c9; clip-path: polygon(0 0, 25px 0, 36px 10px, 36px 45px, 0 45px); margin-left: -2px; }
.page pre { margin: 5px 0 0 3px; width: 24px; overflow: hidden; font: 9px/10px "DejaVu Sans Mono", monospace; letter-spacing: -.5px; color: #666; }
.page i { position: absolute; right: -1px; top: -1px; border: 5px solid; border-width: 5.500px; border-color: transparent transparent #fff #fff; filter: drop-shadow(-1px 1px 1px #999); }
figcaption { color: #fff; margin-top: 3px; text-shadow: 1px 1px 1px #000; padding-top: 1px; }
.stage { position: absolute; left: 81px; top: 301px; width: 200px; height: 478px; border: 1px solid #8a8a8a; border-top: 0; border-radius: 6px 0 0 0; background: #c3c3c3; box-shadow: 0 4px 14px rgba(0, 0, 0, .8); display: flex; flex-direction: column; overflow: hidden; clip-path: inset(-20px 0 -20px -20px); }
.bar { height: 30px; flex: none; margin-left: -1px; background: linear-gradient(#45443f, #3c3b37); display: flex; align-items: center; padding-left: 12px; gap: 11px; border-radius: 6px 0 0 0; }
.bar b { color: #8b887f; margin-bottom: 1px; }
.menu { height: 29px; flex: none; border: 1px solid #eee; border-bottom: 1px solid #555; background: #c3c3c3; display: flex; font: 13.500px/27px "DejaVu Sans Condensed", "DejaVu Sans", sans-serif; color: #111; padding-left: 8px; gap: 16px; }
.menu span { flex: none; white-space: nowrap; }
.menu u { text-underline-offset: 3px; }
.world { width: 188px; height: 393px; flex: none; display: block; }
.axis { font: 36px "DejaVu Sans Mono", monospace; letter-spacing: -3.500px; fill: #222; }
.wall { fill: none; stroke: #333; stroke-width: 10; stroke-dasharray: 10 1; }
.clock { flex: 1; background: #ccccff; font: 12px/32px "DejaVu Sans Mono", monospace; letter-spacing: -1.220px; color: #111; padding-left: 10px; white-space: nowrap; }
.rviz { position: absolute; left: 270px; top: 34px; width: 1649px; height: 1046px; display: flex; flex-direction: column; background: #cecece; border-radius: 6px 6px 0 0; box-shadow: 0 2px 14px rgba(0, 0, 0, .75), -1px 0 0 #6f6f6c; }
.title { height: 29px; flex: none; display: flex; align-items: center; gap: 12px; padding: 0 0 2px 10px; background: linear-gradient(#4b4a44, #3c3b37 60%); border-radius: 6px 6px 0 0; border-top: 1px solid #5b5a53; }
.title svg, .bar svg { flex: none; }
.title b { color: #dfdbd2; margin-bottom: 1px; }
.tools { height: 33px; flex: none; background: #f2f1ef; border-bottom: 2px solid #9b9a98; display: flex; align-items: center; }
.grip { width: 10px; height: 31px; background: radial-gradient(circle, #777 .9px, transparent 1.200px) 3px 4px / 4px 4.500px repeat-y #cdcdcd; margin-right: 2px; }
.tool { display: inline-flex; height: 27px; align-items: center; padding-bottom: 2px; }
.active { width: 102px; justify-content: center; border: 1px solid #9d9d9d; border-radius: 4px; background: linear-gradient(#d8d8d8, #c4c4c4); margin-right: 6px; padding: 0 0 0 1px; }
.c2 { margin-left: 17px; } .c3 { margin-left: 18px; } .c4 { margin-left: 11px; }
.middle { height: 913px; flex: none; display: flex; }
.dock { width: 307px; flex: none; border: 1px solid #9a9a9a; border-top: 0; background: #f2f1ef; display: flex; flex-direction: column; }
.dockhead, .timehead { height: 18px; flex: none; display: flex; justify-content: space-between; align-items: center; padding: 0 4px 3px 3px; background: linear-gradient(#acacac, #c8c8c8); font: 11.500px/15px "DejaVu Sans", sans-serif; color: #111; }
.tree { position: relative; height: 729px; flex: none; border: 1px solid #b5b3b0; border-top-color: #f5f5f5; border-left-color: #f5f5f5; background: #fff; overflow: hidden; }
.row { height: 22px; display: flex; background: #fff; }
.row > div { height: 22px; }
.gutter { width: 19px; flex: none; background: #cdcdcd; padding: 5px 0 0 4px; line-height: 0; }
.name { width: 132px; flex: none; padding-left: 26px; overflow: hidden; border-bottom: 1px solid #cdcdcd; line-height: 20px; white-space: nowrap; }
.val { flex: 1; min-width: 0; overflow: hidden; border-left: 1px solid #cdcdcd; border-bottom: 1px solid #cdcdcd; display: flex; line-height: 20px; padding-left: 5px; white-space: nowrap; letter-spacing: -.15px; position: relative; }
.display .name { padding-left: 5px; font-weight: bold; color: #fff; }
.display.ok .name { background: #05587e; }
.display.off .name { background: #aaa; color: #36474c; }
.display.warn .name { background: #dfd710; }
.light.display .name { font-weight: normal; }
.status .gutter { width: 39px; padding-left: 25px; }
.status .name { width: auto; flex: 1; padding-left: 5px; font-weight: bold; color: #000; }
.status.off .name { background: #aaa; color: #36474c; }
.selected .name { background: #cdcdcd; }
.check { margin-top: 3px; flex: none; }
.swatch { width: 20px; height: 19px; flex: none; border: 1px solid #333; margin: 1px 10px 0 -1px; }
.selected .swatch { margin-right: 11px; }
.more { position: absolute; right: 2px; top: 0; width: 23px; height: 21px; padding: 0; border: 1px solid #a3a3a3; border-radius: 4px; background: linear-gradient(#eee, #cfcfcf); font: 12px/17px "Noto Sans", sans-serif; color: #444; }
.thumb { position: absolute; right: 0; top: 194px; width: 3px; height: 430px; background: #e3a083; }
.help { margin: 9px 1px 0 0; height: 115px; flex: none; border: 1px solid #dcdad7; border-radius: 4px; padding: 5px 8px 8px 9px; }
.help > div { height: 100px; background: #eeebe6; padding: 11px 10px; display: flex; flex-direction: column; align-items: flex-start; font: 14px/18px "DejaVu Sans", sans-serif; color: #000; }
.buttons { display: flex; gap: 12px; padding: 7px 0 0 6px; }
button { font: inherit; color: #4c4c4c; }
.buttons button, .reset { width: 83px; height: 27px; padding: 0 0 1px; border: 1px solid #9a9a9a; border-radius: 4px; background: linear-gradient(#dedede, #c4c4c4); box-shadow: 0 0 1px #999; line-height: 22px; }
.split { width: 5px; flex: none; display: flex; align-items: center; }
.split i { width: 5px; height: 7px; margin-top: 2px; background: repeating-linear-gradient(#fff 0 1px, #bbb 1px 3px); }
.view { width: 1336px; height: 913px; flex: none; border: 1px solid #9a9a9a; border-top: 0; padding: 1px 1px 1px 2px; background: #f3f1ec; }
.view svg { display: block; margin: 1px 0 0 0; }
.grid { fill: none; stroke: #969696; stroke-width: 1; shape-rendering: crispEdges; }
.thin { fill: none; stroke-width: 1; shape-rendering: crispEdges; }
.hsplit { height: 5px; flex: none; display: flex; justify-content: center; }
.hsplit i { width: 7px; height: 5px; margin-left: 2px; background: repeating-linear-gradient(90deg, #fff 0 1px, #bbb 1px 3px); }
.time { flex: 1; border: 1px solid #9a9a9a; border-bottom: 3px solid #9a9a9a; background: #f2f1ef; display: flex; flex-direction: column; }
.timehead { height: 17px; padding-bottom: 2px; }
.fields { display: flex; align-items: center; height: 45px; padding-left: 5px; }
.fields > * { flex: none; }
.fields label { margin-top: -2px; }
.input { height: 25px; border: 1px solid #a9a7a3; border-radius: 3px; background: #fff; color: #3c3c3c; padding-left: 4px; line-height: 21px; }
label.f1 { width: 82px; } .input.f1 { width: 295px; }
label.f2 { width: 113px; padding-left: 11px; } .input.f2 { width: 275px; }
label.f3 { width: 91px; padding-left: 11px; } .input.f3 { width: 297px; }
label.f4 { width: 111px; padding-left: 11px; } .input.f4 { width: 277px; }
.reset { margin-left: 12px; }
</style>
